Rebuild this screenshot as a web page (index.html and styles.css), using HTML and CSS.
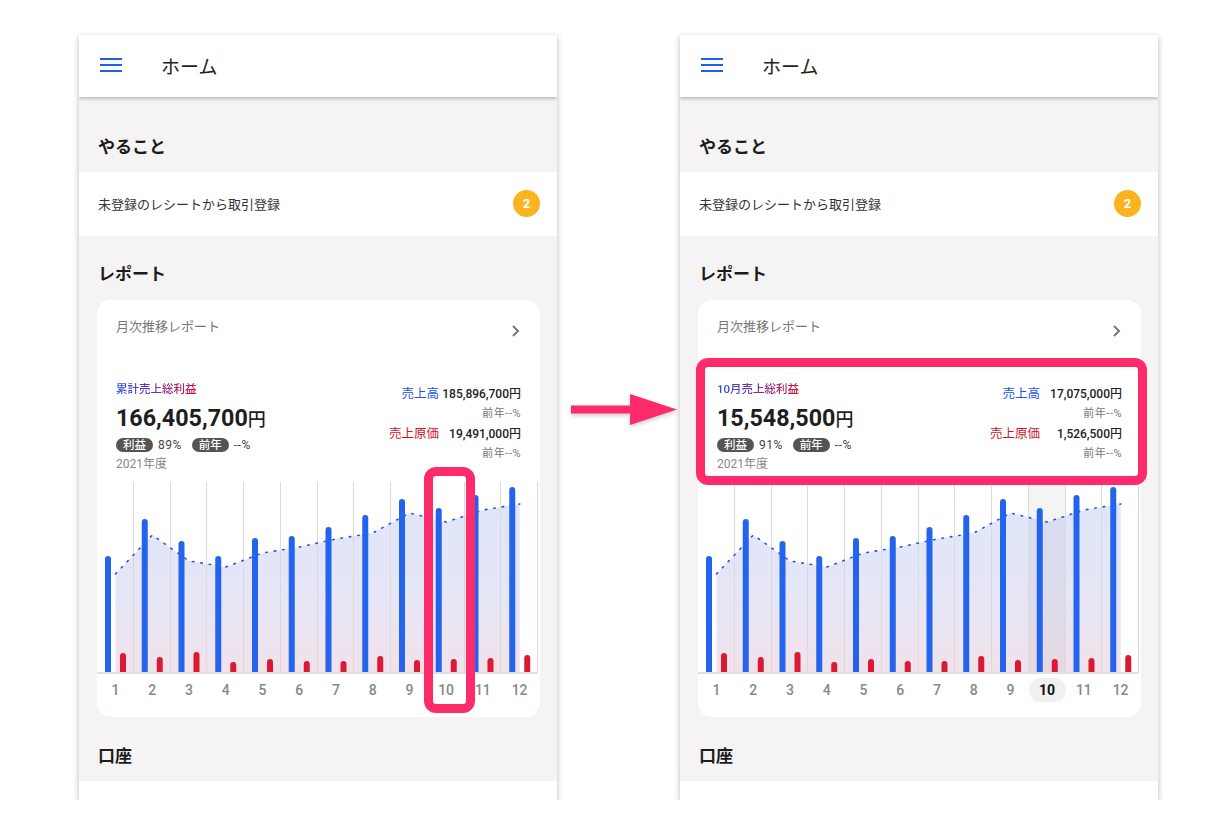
FILE: index.html
```html
<!DOCTYPE html>
<html lang="ja">
<head>
    <meta charset="UTF-8">
    <meta name="viewport" content="width=device-width, initial-scale=1.0">
    <title>ホーム</title>
    <link rel="stylesheet" href="styles.css">
</head>
<body>
    <div class="stage">

        <!-- before: year total -->
        <div class="phone">
            <header class="app-bar">
                <svg class="menu-icon" width="22" height="14" viewBox="0 0 22 14">
                    <rect x="0" y="0" width="22" height="2" fill="#1f5ff0"/>
                    <rect x="0" y="6" width="22" height="2" fill="#1f5ff0"/>
                    <rect x="0" y="12" width="22" height="2" fill="#1f5ff0"/>
                </svg>
                <span class="app-title">ホーム</span>
            </header>
            <main class="content">
                <h2 class="section-title">やること</h2>
                <div class="todo-row">
                    <span>未登録のレシートから取引登録</span>
                    <span class="badge">2</span>
                </div>

                <h2 class="section-title report-title">レポート</h2>
                <div class="card">
                    <div class="card-head">
                        <span>月次推移レポート</span>
                        <svg class="chevron" width="10" height="12" viewBox="0 0 10 12">
                            <path d="M2 1 L7 6 L2 11" fill="none" stroke="#777" stroke-width="2"/>
                        </svg>
                    </div>
                    <div class="summary">
                        <div class="summary-main">
                            <div class="summary-label">累計売上総利益</div>
                            <div class="summary-amount">166,405,700<span class="yen">円</span></div>
                            <div class="summary-rates">
                                <span class="pill">利益</span><span class="rate">89%</span>
                                <span class="pill">前年</span><span class="rate">--%</span>
                            </div>
                            <div class="summary-year">2021年度</div>
                        </div>
                        <div class="summary-side">
                            <span class="side-label sales">売上高</span><span class="side-value">185,896,700円</span>
                            <span class="side-prev">前年--%</span>
                            <span class="side-label cost">売上原価</span><span class="side-value">19,491,000円</span>
                            <span class="side-prev">前年--%</span>
                        </div>
                    </div>
                    <div class="chart" data-selected="0"></div>
                    <div class="highlight highlight-column"></div>
                </div>

                <h2 class="section-title account-title">口座</h2>
                <div class="account-card"></div>
            </main>
        </div>

        <svg class="arrow" width="106" height="31" viewBox="0 0 106 31">
            <rect x="0" y="11.5" width="62" height="8" fill="#fd2b6a"/>
            <polygon points="59,0 106,15.5 59,31" fill="#fd2b6a"/>
        </svg>

        <!-- after: October selected -->
        <div class="phone">
            <header class="app-bar">
                <svg class="menu-icon" width="22" height="14" viewBox="0 0 22 14">
                    <rect x="0" y="0" width="22" height="2" fill="#1f5ff0"/>
                    <rect x="0" y="6" width="22" height="2" fill="#1f5ff0"/>
                    <rect x="0" y="12" width="22" height="2" fill="#1f5ff0"/>
                </svg>
                <span class="app-title">ホーム</span>
            </header>
            <main class="content">
                <h2 class="section-title">やること</h2>
                <div class="todo-row">
                    <span>未登録のレシートから取引登録</span>
                    <span class="badge">2</span>
                </div>

                <h2 class="section-title report-title">レポート</h2>
                <div class="card">
                    <div class="card-head">
                        <span>月次推移レポート</span>
                        <svg class="chevron" width="10" height="12" viewBox="0 0 10 12">
                            <path d="M2 1 L7 6 L2 11" fill="none" stroke="#777" stroke-width="2"/>
                        </svg>
                    </div>
                    <div class="summary">
                        <div class="summary-main">
                            <div class="summary-label">10月売上総利益</div>
                            <div class="summary-amount">15,548,500<span class="yen">円</span></div>
                            <div class="summary-rates">
                                <span class="pill">利益</span><span class="rate">91%</span>
                                <span class="pill">前年</span><span class="rate">--%</span>
                            </div>
                            <div class="summary-year">2021年度</div>
                        </div>
                        <div class="summary-side">
                            <span class="side-label sales">売上高</span><span class="side-value">17,075,000円</span>
                            <span class="side-prev">前年--%</span>
                            <span class="side-label cost">売上原価</span><span class="side-value">1,526,500円</span>
                            <span class="side-prev">前年--%</span>
                        </div>
                    </div>
                    <div class="chart" data-selected="10"></div>
                    <div class="highlight highlight-summary"></div>
                </div>

                <h2 class="section-title account-title">口座</h2>
                <div class="account-card"></div>
            </main>
        </div>

    </div>

    <script src="script.js"></script>
</body>
</html>
```

FILE: styles.css
```css
body {
    margin: 0;
    padding: 0;
    background-color: #ffffff;
    font-family: Roboto, "Noto Sans CJK JP", sans-serif;
    color: #222;
}

.stage {
    display: flex;
    align-items: flex-start;
    padding: 35px 0 0 79px;
}

.phone {
    width: 478px;
    height: 765px;
    overflow: hidden;
    background-color: #ffffff;
    box-shadow: 0 2px 6px rgba(0, 0, 0, 0.28);
    display: flex;
    flex-direction: column;
}

.app-bar {
    height: 60px;
    padding: 0 0 2px 21px;
    flex-shrink: 0;
    display: flex;
    align-items: center;
    background-color: #ffffff;
    box-shadow: 0 2px 3px rgba(0, 0, 0, 0.22);
    position: relative;
    z-index: 1;
}

.menu-icon {
    display: block;
}

.app-title {
    margin-left: 39px;
    font-size: 19px;
    color: #222;
}

.content {
    background-color: #f5f3f4;
}

.section-title {
    margin: 0;
    padding: 38px 19px 13px;
    font-size: 17px;
    line-height: 24px;
    font-weight: 700;
    color: #1c1c1c;
}

.report-title {
    padding: 26px 19px 14px;
}

.account-title {
    padding: 27px 19px 13px;
}

.todo-row {
    height: 64px;
    display: flex;
    align-items: center;
    justify-content: space-between;
    padding: 0 17px 2px 19px;
    box-sizing: border-box;
    background-color: #ffffff;
    font-size: 13px;
    color: #333;
}

.badge {
    width: 27px;
    height: 27px;
    border-radius: 50%;
    background-color: #fbb41f;
    color: #ffffff;
    font-size: 13px;
    font-weight: 700;
    display: flex;
    align-items: center;
    justify-content: center;
}

.card {
    position: relative;
    margin: 0 17px 0 18px;
    padding-bottom: 15px;
    background-color: #ffffff;
    border-radius: 14px;
}

.card-head {
    display: flex;
    justify-content: space-between;
    align-items: flex-start;
    height: 18px;
    padding: 18px 19px 0;
    font-size: 13px;
    line-height: 18px;
    color: #777;
}

.chevron {
    margin-top: 7px;
}

.summary {
    display: flex;
    justify-content: space-between;
    align-items: flex-start;
    margin-top: 45px;
    padding: 0 19px;
}

.summary-main {
    line-height: 16px;
}

.summary-label {
    width: fit-content;
    font-size: 11.5px;
    line-height: 16px;
    font-weight: 500;
    background: linear-gradient(90deg, #2450e6, #7a2c9a 50%, #d8123a);
    -webkit-background-clip: text;
    background-clip: text;
    color: transparent;
}

.summary-amount {
    margin-top: 6px;
    height: 30px;
    font-size: 23.3px;
    line-height: 30px;
    font-weight: 700;
    color: #1e1e1e;
}

.yen {
    font-size: 18px;
    font-weight: 500;
}

.summary-rates {
    margin-top: 4px;
    height: 16px;
    display: flex;
    align-items: center;
    font-size: 12px;
    line-height: 16px;
    color: #444;
}

.pill {
    display: inline-block;
    height: 14px;
    line-height: 14px;
    padding: 0 7px;
    border-radius: 7px;
    background-color: #545454;
    color: #ffffff;
    font-size: 11.5px;
    font-weight: 500;
}

.rate {
    margin: 0 10px 0 5px;
    letter-spacing: 0.5px;
}

.summary-year {
    margin-top: 3px;
    font-size: 12px;
    line-height: 16px;
    color: #888;
}

.summary-side {
    display: grid;
    grid-template-columns: auto 80px;
    column-gap: 2px;
    margin-top: 3px;
    text-align: right;
    line-height: 20px;
}

.side-label {
    font-size: 12.5px;
}

.side-label.sales {
    color: #2152ec;
}

.side-label.cost {
    color: #d50f27;
}

.side-value {
    font-size: 12px;
    font-weight: 500;
    color: #222;
}

.side-prev {
    grid-column: 2;
    font-size: 11px;
    color: #777;
    letter-spacing: 0.5px;
}

.chart {
    margin-top: 10px;
}

.chart svg {
    display: block;
}

.months {
    display: flex;
    margin-top: 4px;
    width: 441px;
}

.months span {
    flex: 1;
    height: 24px;
    line-height: 24px;
    text-align: center;
    font-size: 14px;
    font-weight: 500;
    color: #888;
}

.months span.selected {
    color: #111;
    font-weight: 700;
    background-color: #f1eff0;
    border-radius: 12px;
}

.highlight {
    position: absolute;
    border: 9px solid #fd2b6a;
    border-radius: 12px;
    box-sizing: border-box;
    pointer-events: none;
}

.highlight-column {
    left: 327px;
    top: 167px;
    width: 51px;
    height: 246px;
}

.highlight-summary {
    left: -2px;
    top: 58px;
    width: 451px;
    height: 127px;
}

.account-card {
    height: 30px;
    background-color: #ffffff;
}

.arrow {
    flex-shrink: 0;
    margin: 359px 3px 0 14px;
    filter: drop-shadow(0 2px 2px rgba(0, 0, 0, 0.2));
}
```

FILE: script.js
```js
// monthly sales / cost bars and running gross-profit trend (px heights)
const sales = [116, 153, 131, 116, 134, 136, 145, 157, 173, 164, 177, 185];
const costs = [19, 15, 20, 10, 13, 11, 11, 16, 12, 13, 14, 17];
const trend = [92, 53, 79, 85, 71, 65, 57, 51, 31, 40, 28, 22];

const WIDTH = 441;
const COL = WIDTH / 12;
const BASE = 190;

function barPath(x, h) {
    const w = 6;
    const r = w / 2;
    const top = BASE - h;
    return `M${x},${BASE} V${top + r} A${r},${r} 0 0 1 ${x + w},${top + r} V${BASE} Z`;
}

function drawChart(el, n) {
    const selected = Number(el.dataset.selected);
    const gid = "fill" + n;
    let svg = `<svg width="${WIDTH}" height="192" viewBox="0 0 ${WIDTH} 192">`;
    svg += `<defs><linearGradient id="${gid}" x1="0" y1="0" x2="0" y2="1">
        <stop offset="0" stop-color="#dfe6fa"/>
        <stop offset="0.55" stop-color="#e6e6f6"/>
        <stop offset="1" stop-color="#f1e2ea"/>
    </linearGradient></defs>`;

    // area under the trend line
    const pts = trend.map((y, i) => `${(i * COL + 18.5).toFixed(1)},${y}`);
    const lastX = (11 * COL + 18.5).toFixed(1);
    svg += `<polygon points="18.5,${BASE} ${pts.join(" ")} ${lastX},${BASE}" fill="url(#${gid})"/>`;

    if (selected) {
        const x = (selected - 1) * COL;
        svg += `<rect x="${x}" y="0" width="${COL}" height="${BASE}" fill="rgba(90,60,80,0.06)"/>`;
    }

    // grid lines
    for (let i = 1; i <= 12; i++) {
        const x = Math.round(i * COL) - 0.5;
        svg += `<line x1="${x}" y1="0" x2="${x}" y2="${BASE}" stroke="#ddd8da" stroke-width="1"/>`;
    }

    svg += `<polyline points="${pts.join(" ")}" fill="none" stroke="#1f55ee" stroke-width="1.6" stroke-dasharray="1.5 7" stroke-linecap="round"/>`;

    sales.forEach((h, i) => {
        svg += `<path d="${barPath(i * COL + 8, h)}" fill="#2463eb"/>`;
    });
    costs.forEach((h, i) => {
        svg += `<path d="${barPath(i * COL + 23, h)}" fill="#da1a34"/>`;
    });

    svg += `<rect x="0" y="${BASE}" width="${WIDTH + 2}" height="2" fill="#e2dddf"/>`;
    svg += `</svg>`;

    let months = `<div class="months">`;
    for (let m = 1; m <= 12; m++) {
        months += `<span class="${m === selected ? "selected" : ""}">${m}</span>`;
    }
    months += `</div>`;

    el.innerHTML = svg;
    el.insertAdjacentHTML("afterend", months);
}

document.querySelectorAll(".chart").forEach((el, n) => drawChart(el, n));
```
